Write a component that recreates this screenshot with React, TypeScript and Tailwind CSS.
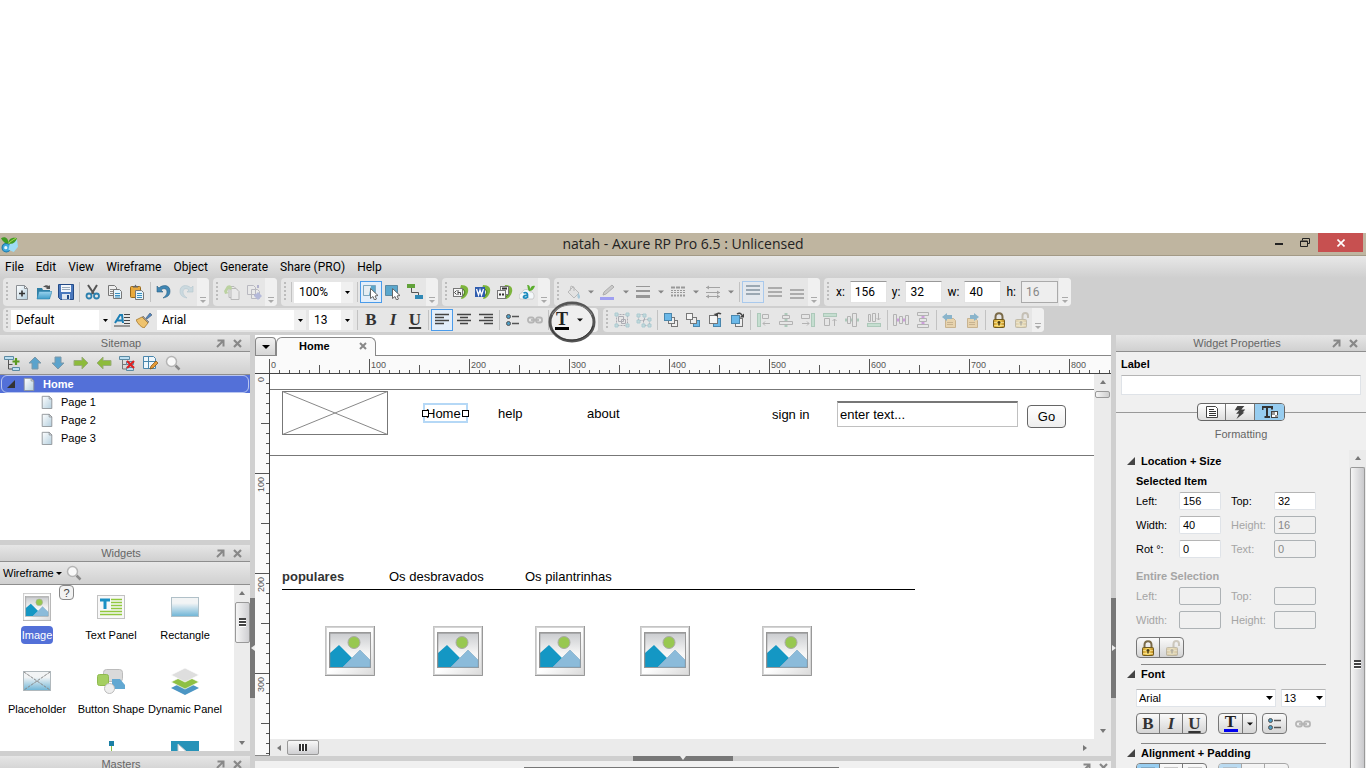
import { ReactNode } from 'react';

type IconName = keyof typeof icons;

const doc = (
  <>
    <path d="M2.5 1.5h8l3 3v11h-11z" fill="url(#page)" stroke="#8a8f94" />
    <path d="M10.5 1.5v3h3z" fill="#fff" stroke="#8a8f94" />
  </>
);

const phone = (
  <>
    <path d="M8 1c6 0 8 3 7 7-1 4-4 7-7 7l1-4c2-1 3-3 1-5l-3-1z" fill="#7db53c" />
    <path d="M10 5c3 2 2 6-1 8" fill="none" stroke="#4f8424" strokeWidth="1" />
  </>
);

const stackBox = (x: number, y: number, fill: string) => (
  <rect x={x} y={y} width="6" height="6" fill={fill} stroke="#777" />
);

const lockBody = (
  <>
    <rect x="2.5" y="7.5" width="11" height="8" rx="1" fill="url(#gold)" stroke="#6e5a20" />
    <path d="M3 10.5h10M3 13.5h10" stroke="#fff3b0" strokeOpacity=".6" />
    <path d="M8 9v4.5M6.5 10.5h3" stroke="#4b3c10" strokeWidth="1.5" />
  </>
);

const note = (
  <path d="M3.5 6.5h8l2 2v7h-10zM5 10.5h6M5 12.5h6" fill="#e9c582" stroke="#b08a4a" />
);

const icons = {
  logo: (
    <>
      <circle cx="5" cy="11" r="4" fill="#3fa9dd" stroke="#1575a8" />
      <circle cx="4.5" cy="11" r="1.5" fill="#e8f7ff" />
      <path d="M8 8l7-5 1 7-4 5-5-2z" fill="#9edcf5" />
      <path d="M0 2c4-2 7 0 7 5-4 0-5-2-7-5zM7 7c0-4 3-6 8-5-1 4-4 6-8 5z" fill="#3f9a22" />
      <path d="M7 7c2-2 4-3 7-5" stroke="#a5dd52" />
    </>
  ),
  newFile: (
    <>
      {doc}
      <path d="M5 9.5h6M8 6.5v6" stroke="#333" strokeWidth="1.6" />
    </>
  ),
  open: (
    <>
      <path d="M1 4h5l1 2h7v9H1z" fill="#2f7fa5" />
      <path d="M3 7.5h13L13.5 15H1z" fill="url(#sky)" stroke="#3186b0" strokeWidth=".6" />
      <path d="M7 3c2-2 4-2 6-1l1-1v4h-4l1-1c-1-1-2-1-4-1z" fill="#555" />
    </>
  ),
  save: (
    <>
      <path d="M.5.5h15v15h-13l-2-2z" fill="#4a78bd" stroke="#234a86" />
      <rect x="3" y="1" width="10" height="7" fill="#f3f6fb" />
      <path d="M4 3.5h8M4 5.5h8" stroke="#9ab" />
      <rect x="4" y="10" width="8" height="5.5" fill="#dfe6ef" />
      <rect x="9" y="11" width="2" height="4" fill="#234a86" />
    </>
  ),
  cut: (
    <>
      <path d="M3 1l6 9M12 1L6.5 10" stroke="#555" strokeWidth="2" />
      <circle cx="4" cy="12" r="2.5" fill="none" stroke="#2c80ae" strokeWidth="1.8" />
      <circle cx="11.5" cy="12" r="2.5" fill="none" stroke="#2c80ae" strokeWidth="1.8" />
    </>
  ),
  copy: (
    <>
      <path d="M1.5 1.5h6l2 2v8h-8z" fill="#eee" stroke="#777" />
      <path d="M3 5.5h5M3 7.5h5M3 9.5h3" stroke="#888" />
      <path d="M6.5 5.5h6l2 2v7h-8z" fill="#e5f3fb" stroke="#777" />
      <path d="M8 9.5h5M8 11.5h5M8 13h5" stroke="#3a8fbf" />
    </>
  ),
  paste: (
    <>
      <rect x="1.5" y="2.5" width="10" height="11" rx="1" fill="#e8a93c" stroke="#96681a" />
      <path d="M4 3.5V2h1.5L6.5.5 7.5 2H9v1.5z" fill="#666" />
      <path d="M6.5 6.5h6l2 2v7h-8z" fill="#e5f3fb" stroke="#777" />
      <path d="M8 9.5h5M8 11.5h5M8 13.5h5" stroke="#3a8fbf" />
    </>
  ),
  undo: (
    <path
      d="M1 2v6h6L5 6c2-2 6-2 6 2 0 3-2 4-4 6 5-1 7-3 7-7 0-6-7-7-11-3z"
      fill="#3f87b5"
      stroke="#2b5f82"
      strokeWidth=".6"
    />
  ),
  redo: (
    <path
      d="M15 2v6H9l2-2C9 4 5 4 5 8c0 3 2 4 4 6-5-1-7-3-7-7 0-6 7-7 11-3z"
      fill="#cbd9df"
      stroke="#b4c6ce"
      strokeWidth=".6"
    />
  ),
  rotatePage: (
    <g opacity=".4">
      <path d="M5 2.5h5l3 3v8H5z" fill="#eee" stroke="#777" />
      <path d="M7 4.5h5l3 3v8H7z" fill="#eee" stroke="#777" />
      <path d="M0 7l3-5c3-2 5 0 5 3L6 6C5 4 4 5 3 8l2 1-4 1z" fill="#7db53c" />
    </g>
  ),
  movePage: (
    <g opacity=".4">
      <path d="M1.5 1.5h6l2 2v7h-8zM5.5 5.5h6l2 2v7h-8z" fill="#eee" stroke="#778" />
      <path d="M12 1v3M8 11h4" stroke="#66a" strokeWidth="2" />
      <path d="M12 8l4 4-4 4-4-4z" fill="#6a78c8" />
    </g>
  ),
  selectContain: (
    <>
      <path d="M.5 1.5h12v10H.5z" fill="#5ba7cc" stroke="#7fa7be" />
      <path d="M1 2h7l-2 9H1z" fill="#e6edf2" />
      <path d="M7.5 4.5v10l2.5-2 1.5 3.5 2-1-1.5-3 3-.5z" fill="#fff" stroke="#666" />
    </>
  ),
  selectTouch: (
    <>
      <path d="M.5 1.5h12v10H.5z" fill="#5ba7cc" stroke="#5c8aa3" />
      <path d="M7.5 4.5v10l2.5-2 1.5 3.5 2-1-1.5-3 3-.5z" fill="#fff" stroke="#666" />
    </>
  ),
  connector: (
    <>
      <path d="M4.5 4v4.5h7V12" fill="none" stroke="#555" />
      <rect x="0" y="0" width="8" height="4" fill="#62a23a" />
      <rect x="8" y="11" width="8" height="4" fill="#2f88b5" />
    </>
  ),
  html: (
    <>
      {phone}
      <rect x=".5" y="4.5" width="9" height="8" fill="#f5f5f5" stroke="#777" />
      <path d="M3.5 6.5l-2 2 2 2M5 6v5M5 8.5h2.5V11" fill="none" stroke="#444" />
    </>
  ),
  word: (
    <>
      {phone}
      <rect x="0" y="3" width="10" height="10" fill="#2f5cae" />
      <path d="M1.5 5l2 6L5 6l1.5 5 2-6" fill="none" stroke="#fff" strokeWidth="1.3" />
    </>
  ),
  batch: (
    <>
      {phone}
      <rect x="3.5" y="2.5" width="8" height="8" fill="#f5f5f5" stroke="#777" />
      <rect x=".5" y="6.5" width="8" height="8" fill="#f5f5f5" stroke="#777" />
      <path d="M2 10.5h2M5 10.5h2M5 4.5h5" stroke="#333" strokeWidth="2" />
    </>
  ),
  axshare: (
    <>
      <path d="M1 15c-2-3 0-6 2-6 0-4 7-5 8-1 4-1 5 5 3 7z" fill="#f4f8fa" stroke="#aaa" strokeWidth=".5" />
      <path
        d="M4.5 9c2-1 4 0 4 1.5V14M8.5 11.5c-4-.5-5 2-3 2.5 1 .3 3 0 3-1.5"
        fill="none"
        stroke="#1b8bbd"
        strokeWidth="1.7"
      />
      <path d="M10 7C8 4 9 2 8 1c3 0 3 2 3 4 1-3 3-4 5-3-1 3-3 5-6 5z" fill="#5bae2e" />
    </>
  ),
  bucket: (
    <g opacity=".4">
      <path d="M3 8l5-5 6 6-5 5z" fill="#ddd" stroke="#777" />
      <path d="M5 7l1-5 3 1v4" fill="none" stroke="#777" />
      <path d="M13 9c2 2 3 4 1 6-2-1-2-3-1-6z" fill="#4d9cc5" />
    </g>
  ),
  pen: (
    <g opacity=".45">
      <path d="M3 11l1-3 8-7 2 2-8 7z" fill="#aaa" stroke="#666" />
      <rect x="0" y="13" width="14" height="3" fill="#4b4bff" />
    </g>
  ),
  lineWidth: (
    <g stroke="#777" opacity=".7">
      <path d="M1 2.5h14" />
      <path d="M1 7h14" strokeWidth="2" />
      <path d="M1 12.5h14" strokeWidth="3" />
    </g>
  ),
  lineStyle: (
    <g opacity=".6" stroke="#666" fill="none">
      <path d="M1 3.5h14" strokeWidth="2" strokeDasharray="4 1" />
      <path d="M1 6.5h14M1 8.5h14" strokeDasharray="2 1" />
      <path d="M1 11.5h14" strokeWidth="2" strokeDasharray="2 1" />
    </g>
  ),
  arrows: (
    <g stroke="#888" fill="#888" opacity=".7">
      <path d="M1 3.5h14M1 8.5h14M1 12.5h14" />
      <path d="M4 1.5v4l-3-2zM12 6.5v4l3-2zM4 10.5v4l-3-2zM12 10.5v4l3-2z" stroke="none" />
    </g>
  ),
  valignTop: <path d="M1 2h14M1 6h14M1 10h14" stroke="#8492a0" strokeWidth="1.5" />,
  valignMid: <path d="M1 4h14M1 8h14M1 12h14" stroke="#999" strokeWidth="1.5" />,
  valignBot: <path d="M1 6h14M1 10h14M1 14h14" stroke="#999" strokeWidth="1.5" />,
  styleText: (
    <>
      <path d="M1 11l5-8h2l1 8M3 8.5h5" fill="none" stroke="#1c7fb5" strokeWidth="2" />
      <path d="M10 2.5h6M10 5.5h6M10 8.5h6M10 11.5h6M0 14h16" stroke="#444" />
    </>
  ),
  brush: (
    <>
      <path d="M10 6l4-5 2 2-5 4z" fill="#4f86c4" stroke="#456" strokeWidth=".6" />
      <path d="M7 4l6 6-2 1-5-5z" fill="#999" stroke="#666" strokeWidth=".6" />
      <path d="M6 5l6 6-4 5c-3-1-6-4-8-8z" fill="#eec26d" stroke="#a5762a" strokeWidth=".8" />
    </>
  ),
  left: <path d="M1 2.5h14M1 5.5h9M1 8.5h14M1 11.5h9" stroke="#444" strokeWidth="1.5" />,
  center: <path d="M1 2.5h14M4 5.5h8M1 8.5h14M4 11.5h8" stroke="#444" strokeWidth="1.5" />,
  right: <path d="M1 2.5h14M6 5.5h9M1 8.5h14M6 11.5h9" stroke="#444" strokeWidth="1.5" />,
  bullets: (
    <>
      <path d="M7 4.5h7M7 11.5h7" stroke="#555" strokeWidth="1.5" />
      <circle cx="3.5" cy="4.5" r="2" fill="#4b9cc4" stroke="#555" />
      <circle cx="3.5" cy="11.5" r="2" fill="#4b9cc4" stroke="#555" />
    </>
  ),
  link: (
    <g fill="none" stroke="#b5b5b5" strokeWidth="1.8">
      <rect x="1" y="5.5" width="6" height="5" rx="2" />
      <rect x="9" y="5.5" width="6" height="5" rx="2" />
      <path d="M4 8h8" />
    </g>
  ),
  group: (
    <g opacity=".45" fill="none" stroke="#667">
      <path d="M2.5 2.5h11v11h-11z" strokeDasharray="2 1" />
      <path d="M4.5 4.5h5v5h-5zM7.5 7.5h4v4h-4z" />
      <path d="M1 1h3v3H1zM12 1h3v3h-3zM1 12h3v3H1zM12 12h3v3h-3z" fill="#9cc" stroke="#6ab" />
    </g>
  ),
  ungroup: (
    <g opacity=".45" fill="none" stroke="#667">
      <path d="M2.5 2.5h6v6h-6zM7.5 7.5h6v6h-6z" strokeDasharray="2 1" />
      <path
        d="M1 2h3v3H1zM7 2h3v3H7zM12 6h3v3h-3zM1 8h3v3H1zM6 12h3v3H6zM12 12h3v3h-3z"
        fill="#9cc"
        stroke="#6ab"
      />
    </g>
  ),
  toFront: (
    <>
      {stackBox(8.5, 8.5, '#eee')}
      {stackBox(5.5, 5.5, '#eee')}
      <rect x="1.5" y="1.5" width="7" height="7" fill="#6bb8e8" stroke="#4a86ac" />
    </>
  ),
  toBack: (
    <>
      <rect x="8.5" y="8.5" width="6" height="6" fill="#6bb8e8" stroke="#4a86ac" />
      {stackBox(5.5, 5.5, '#eee')}
      {stackBox(1.5, 1.5, '#f5f5f5')}
    </>
  ),
  forward: (
    <>
      <rect x="6.5" y="6.5" width="7" height="8" fill="#6bb8e8" stroke="#4a86ac" />
      <rect x="2.5" y="3.5" width="8" height="8" fill="#f5f5f5" stroke="#777" />
      <path d="M14 2c-2-1.500-4-1-5 1.500" fill="none" stroke="#444" strokeWidth="1.500" />
      <path d="M6.500 2l4.500 3V1z" fill="#444" />
    </>
  ),
  backward: (
    <>
      <rect x="6.5" y="6.5" width="7" height="8" fill="#eee" stroke="#777" />
      <rect x="2.5" y="3.5" width="8" height="8" fill="#6bb8e8" stroke="#4a86ac" />
      <path d="M8 2c2-1.500 4-1 5 1.500" fill="none" stroke="#444" strokeWidth="1.500" />
      <path d="M15 1.500v4h-4.500z" fill="#444" />
    </>
  ),
  alignL: (
    <g opacity=".45">
      <rect x="1.5" y="1.5" width="3" height="13" fill="#9fd6b6" stroke="#6aa886" />
      <path d="M6.5 2.5h6v4h-6zM14 11.5H7M9 9.5l-2 2 2 2" fill="none" stroke="#777" />
    </g>
  ),
  alignC: (
    <g opacity=".45">
      <path d="M8 1v14" stroke="#6aa886" strokeWidth="3" />
      <path d="M4.5 3.5h7v3h-7zM1.5 9.5h13v3h-13z" fill="#e8e8e8" stroke="#777" />
    </g>
  ),
  alignR: (
    <g opacity=".45">
      <rect x="11.5" y="1.5" width="3" height="13" fill="#9fd6b6" stroke="#6aa886" />
      <path d="M1.5 2.5h8v4h-8zM2 11.5h7M7 9.5l2 2-2 2" fill="none" stroke="#777" />
    </g>
  ),
  alignT: (
    <g opacity=".45">
      <rect x="1.5" y="1.5" width="13" height="3" fill="#9fd6b6" stroke="#6aa886" />
      <path d="M2.5 6.5h5v7h-5zM12.5 14V7M10.5 9l2-2 2 2" fill="none" stroke="#777" />
    </g>
  ),
  alignM: (
    <g opacity=".45">
      <path d="M1 8h14" stroke="#6aa886" strokeWidth="3" />
      <path d="M3.5 4.5h3v7h-3zM8.5 1.5h4v13h-4z" fill="#e8e8e8" stroke="#777" />
    </g>
  ),
  alignB: (
    <g opacity=".45">
      <rect x="1.5" y="11.5" width="13" height="3" fill="#9fd6b6" stroke="#6aa886" />
      <path d="M2.5 2.5h2v7h-2zM6.5 1.5h3v8h-3zM12.5 1v7M10.5 6l2 2 2-2" fill="none" stroke="#777" />
    </g>
  ),
  distH: (
    <g opacity=".45">
      <path d="M4 8h9" stroke="#b04bd0" strokeWidth="3" />
      <path d="M.5 2.5h3v11h-3zM6.5 4.5h3v7h-3zM12.5 3.5h3v9h-3z" fill="#e8e8e8" stroke="#777" />
    </g>
  ),
  distV: (
    <g opacity=".45">
      <path d="M8 3v9" stroke="#b04bd0" strokeWidth="3" />
      <path d="M2.5.5h11v3h-11zM4.5 6.5h7v3h-7zM2.5 12.5h11v3h-11z" fill="#e8e8e8" stroke="#777" />
    </g>
  ),
  prevNote: (
    <g opacity=".55">
      {note}
      <path d="M0 5l5-4v2h5v4H5v2z" fill="#3f8db5" />
    </g>
  ),
  nextNote: (
    <g opacity=".55">
      {note}
      <path d="M15 5l-5-4v2H6v4h4v2z" fill="#3f8db5" />
    </g>
  ),
  lock: (
    <>
      <path d="M4.5 8V5c0-5 7-5 7 0v3" fill="none" stroke="#7a6a48" strokeWidth="2" />
      {lockBody}
    </>
  ),
  unlock: (
    <g opacity=".3">
      <path d="M9.5 8V4c0-4 5.5-4 5.5 0v2" fill="none" stroke="#7a6a48" strokeWidth="2" />
      {lockBody}
    </g>
  ),
  addPage: (
    <>
      <path d="M4.5 5v9h4M4.5 9.5h4" fill="none" stroke="#555" />
      <path d="M.5 1.5h9v3h-9zM8.5 12.5h7v3h-7z" fill="#bcdff2" stroke="#5c8aa3" />
      <path d="M12 3v7M8.5 6.5h7" stroke="#5a9a1e" strokeWidth="2.2" />
    </>
  ),
  up: <path d="M8 2l6 6h-3v6H5V8H2z" fill="#5ba3cc" stroke="#7d98a8" />,
  down: <path d="M8 14l6-6h-3V2H5v6H2z" fill="#5ba3cc" stroke="#7d98a8" />,
  indent: <path d="M15 8L9 2v3.5H1v5h8V14z" fill="#8dbb3c" stroke="#9aad7c" />,
  outdent: <path d="M1 8l6-6v3.5h8v5H7V14z" fill="#8dbb3c" stroke="#9aad7c" />,
  deletePage: (
    <>
      <path d="M3.5 5v9h4M3.5 9.5h4" fill="none" stroke="#777" />
      <path d="M.5 1.5h10v3H.5zM7.5 6.5h7v3h-7zM7.5 12.5h7v3h-7z" fill="#bcdff2" stroke="#5c8aa3" />
      <path d="M8 6l7 7M15 6l-7 7" stroke="#dd2222" strokeWidth="2.2" />
    </>
  ),
  editPage: (
    <>
      <path d="M1.5 1.5h10l2 2v10h-12zM1.5 6.5h12M6.5 1.5v12" fill="#eef6fb" stroke="#4a86ac" />
      <path d="M8 14l1-3 5-5 2 2-5 5z" fill="#e59a35" stroke="#7c4d10" strokeWidth=".7" />
    </>
  ),
  search: (
    <>
      <path d="M10.500 10.500l4 4" stroke="#8a8a8a" strokeWidth="2.500" />
      <circle cx="6.5" cy="6.5" r="5" fill="#f9f9f9" stroke="#b5b5b5" strokeWidth="1.5" />
    </>
  ),
  page: doc,
  notes: (
    <>
      <path d="M2.5 2.5h9l2 2v9h-11z" fill="#fff" stroke="#444" />
      <path d="M5 5.5h5M5 7.5h7M5 9.5h7M5 11.5h7" stroke="#333" />
    </>
  ),
  bolt: <path d="M5 1h8L9.500 5H14l-3 3.500h2L4 16l3-6H3.500L7 6H2z" fill="#444" />,
  formatting: (
    <>
      <path d="M0 3h10v2.5M5 3v10M2.5 13H8M.5 3v3" fill="none" stroke="#333" strokeWidth="2" />
      <rect x="9.5" y="7.5" width="6" height="6" fill="#fff" stroke="#444" />
      <path d="M10 8h3v3h3v2h-3v-2h-3z" fill="#999" />
    </>
  ),
  caret: <path d="M5 6.5h6L8 9.5z" fill="#111" />,
};

const Icon = ({ name, className = 'size-4' }: { name: IconName; className?: string }) => (
  <svg viewBox="0 0 16 16" className={`${className} shrink-0`} aria-hidden="true">
    {icons[name]}
  </svg>
);

const toolButton = 'flex h-[22px] w-[22px] shrink-0 items-center justify-center border';

const Tool = ({ name, label, active }: { name: IconName; label: string; active?: boolean }) => (
  <button
    type="button"
    aria-label={label}
    className={`${toolButton} ${active ? 'border-[#4a9bea] bg-[#e3eefa]' : 'border-transparent'}`}
  >
    <Icon name={name} />
  </button>
);

const letterClass: Record<string, string> = {
  B: 'font-bold',
  I: 'italic font-bold',
  U: 'underline font-bold decoration-2 underline-offset-2',
};

const Letter = ({ children }: { children: string }) => (
  <span className={`font-['Liberation_Serif',serif] text-[17px] leading-5 text-[#333] ${letterClass[children]}`}>
    {children}
  </span>
);

const LetterTool = ({ children, label }: { children: string; label: string }) => (
  <button type="button" aria-label={label} className={`${toolButton} border-transparent`}>
    <Letter>{children}</Letter>
  </button>
);

const Separator = () => (
  <span className="flex w-[5px] shrink-0 justify-center">
    <span className="h-5 w-px bg-[#c2c2c2]" />
  </span>
);

const DropArrow = ({ dim }: { dim?: boolean }) => (
  <span className={`flex w-[13px] shrink-0 justify-center ${dim ? 'opacity-45' : ''}`}>
    <Icon name="caret" />
  </span>
);

const ToolGroup = ({ children }: { children: ReactNode }) => (
  <div className="flex shrink-0 items-center rounded bg-[#e6e6e6]">
    <span className="mx-[3px] h-5 w-0.5 shrink-0 bg-[repeating-linear-gradient(#bcbcbc_0_2px,transparent_2px_4px)]" />
    {children}
    <button
      type="button"
      aria-label="Toolbar options"
      className="flex w-3 shrink-0 items-end justify-center self-stretch rounded-r bg-[#f0f0f0] pb-[3px]"
    >
      <svg viewBox="0 0 6 6" className="size-1.5">
        <path d="M0 .5h6" stroke="#aaa" />
        <path d="M0 3h6L3 6z" fill="#aaa" />
      </svg>
    </button>
  </div>
);

const Combo = ({
  value,
  label,
  className,
  boxed,
}: {
  value: string;
  label: string;
  className: string;
  boxed?: boolean;
}) => (
  <div className={`relative shrink-0 bg-white ${className}`}>
    <select
      aria-label={label}
      className={`h-full w-full appearance-none bg-transparent pr-3 text-black outline-none ${
        boxed ? 'pl-[5px]' : 'pl-0.5'
      }`}
    >
      <option>{value}</option>
    </select>
    <span
      className={`pointer-events-none absolute inset-y-0 right-0 flex w-3 items-center justify-center ${
        boxed ? 'bg-[#f0f0f0]' : ''
      }`}
    >
      <svg viewBox="0 0 7 4" className={boxed ? 'h-[3px] w-[5px]' : 'h-1 w-[7px]'}>
        <path d="M0 0h7L3.5 4z" fill="#000" />
      </svg>
    </span>
  </div>
);

const menus = ['File', 'Edit', 'View', 'Wireframe', 'Object', 'Generate', 'Share (PRO)', 'Help'];

const TitleBar = () => (
  <header className="flex h-[23px] shrink-0 items-center border-b border-[#a39a86] bg-[#bfb5a0]">
    <div className="flex-1">
      <Icon name="logo" className="ml-px size-[17px]" />
    </div>
    <h1 className="font-['Open_Sans',sans-serif] text-sm text-[#222]">natah - Axure RP Pro 6.5 : Unlicensed</h1>
    <div className="flex flex-1 items-center justify-end self-stretch">
      <button type="button" aria-label="Minimize" className="flex h-full w-[26px] items-center justify-center">
        <span className="h-0.5 w-2 bg-[#222]" />
      </button>
      <button type="button" aria-label="Restore" className="flex h-full w-[26px] items-center justify-center pb-1">
        <svg viewBox="0 0 10 9" className="h-[9px] w-2.5">
          <path d="M2.5 2.5v-2h7v5h-2M.5 3h7v5.5h-7zM.5 3.5h7" fill="none" stroke="#222" />
        </svg>
      </button>
      <button
        type="button"
        aria-label="Close"
        className="mr-[3px] flex h-[19px] w-[45px] items-center justify-center self-start bg-[#c75050]"
      >
        <svg viewBox="0 0 8 8" className="size-2">
          <path d="M.5.5l7 7M7.5.5l-7 7" stroke="#fff" strokeWidth="1.6" />
        </svg>
      </button>
    </div>
  </header>
);

const MenuBar = () => (
  <nav className="flex h-[22px] shrink-0 items-center gap-3 bg-linear-to-b from-[#e8e8e8] to-[#cfcfcf] pl-[5px] font-[Roboto,sans-serif] text-xs text-black">
    {menus.map((menu) => (
      <button key={menu} type="button">
        {menu}
      </button>
    ))}
  </nav>
);

const coordinates = [
  { name: 'x', value: '156' },
  { name: 'y', value: '32' },
  { name: 'w', value: '40' },
  { name: 'h', value: '16', disabled: true },
];

const Toolbars = () => (
  <div className="relative z-10 flex shrink-0 flex-col gap-0.5 bg-[#cfcfcf] pb-[3px] pl-[3px] font-[Roboto,sans-serif] text-xs">
    <div className="flex h-7 gap-1">
      <ToolGroup>
        <Tool name="newFile" label="New" />
        <Tool name="open" label="Open" />
        <Tool name="save" label="Save" />
        <Separator />
        <Tool name="cut" label="Cut" />
        <Tool name="copy" label="Copy" />
        <Tool name="paste" label="Paste" />
        <Separator />
        <Tool name="undo" label="Undo" />
        <Tool name="redo" label="Redo" />
      </ToolGroup>
      <ToolGroup>
        <Tool name="rotatePage" label="Check out" />
        <Tool name="movePage" label="Check in" />
      </ToolGroup>
      <ToolGroup>
        <Separator />
        <Combo value="100%" label="Zoom" className="mr-0.5 h-[21px] w-[59px]" boxed />
        <Separator />
        <Tool name="selectContain" label="Contained select" active />
        <Tool name="selectTouch" label="Intersected select" />
        <Tool name="connector" label="Connector mode" />
      </ToolGroup>
      <ToolGroup>
        <Tool name="html" label="Prototype" />
        <Tool name="word" label="Specification" />
        <Tool name="batch" label="More generators" />
        <Tool name="axshare" label="AxShare" />
      </ToolGroup>
      <ToolGroup>
        <Tool name="bucket" label="Fill color" />
        <DropArrow dim />
        <Tool name="pen" label="Line color" />
        <DropArrow dim />
        <Tool name="lineWidth" label="Line width" />
        <DropArrow dim />
        <Tool name="lineStyle" label="Line pattern" />
        <DropArrow dim />
        <Tool name="arrows" label="Arrow style" />
        <DropArrow dim />
        <Separator />
        <button type="button" aria-label="Align top" className={`${toolButton} border-[#a9c9ec] bg-[#e3e8ee]`}>
          <Icon name="valignTop" />
        </button>
        <Tool name="valignMid" label="Align middle" />
        <Tool name="valignBot" label="Align bottom" />
      </ToolGroup>
      <ToolGroup>
        <div className="flex gap-[5px] pl-1 pr-px">
          {coordinates.map(({ name, value, disabled }) => (
            <label key={name} className="flex items-center gap-[5px]">
              {name}:
              <input
                defaultValue={value}
                disabled={disabled}
                className="h-[22px] w-[37px] border border-[#e3e3e3] border-t-[#999] bg-white pl-1 text-black disabled:border-[#aaa] disabled:bg-[#eee] disabled:text-[#888]"
              />
            </label>
          ))}
        </div>
      </ToolGroup>
    </div>

    <div className="flex h-6 gap-[5px]">
      <ToolGroup>
        <Combo value="Default" label="Widget style" className="h-5 w-[100px]" boxed />
        <Tool name="styleText" label="Style editor" />
        <Tool name="brush" label="Format painter" />
        <Combo value="Arial" label="Font family" className="ml-0.5 h-5 w-[149px]" boxed />
        <Combo value="13" label="Font size" className="ml-[3px] mr-0.5 h-5 w-11" boxed />
        <Separator />
        <LetterTool label="Bold">B</LetterTool>
        <LetterTool label="Italic">I</LetterTool>
        <LetterTool label="Underline">U</LetterTool>
        <Separator />
        <Tool name="left" label="Align left" active />
        <Tool name="center" label="Align center" />
        <Tool name="right" label="Align right" />
        <Separator />
        <Tool name="bullets" label="Bullets" />
        <Tool name="link" label="Insert link" />
        <Separator />
        <div className="relative flex items-center">
          <svg viewBox="0 0 48 44" className="absolute -left-[3px] -top-[11px] z-20 h-11 w-12">
            <ellipse cx="24" cy="22" rx="22" ry="19" fill="#efefef" stroke="#555" strokeWidth="3" />
            <path d="M4 15C8 3 38 0 44 15" fill="none" stroke="#888" />
            <path d="M4 30c8 14 34 14 41-4" fill="none" stroke="#333" />
          </svg>
          <button type="button" aria-label="Text color" className="relative z-20 flex w-[22px] flex-col items-center">
            <span className="font-['Liberation_Serif',serif] text-lg font-bold leading-4 text-[#222]">T</span>
            <span className="h-[3px] w-[14px] bg-black" />
          </button>
          <span className="relative z-20 flex">
            <DropArrow />
          </span>
        </div>
      </ToolGroup>
      <ToolGroup>
        <Tool name="group" label="Group" />
        <Tool name="ungroup" label="Ungroup" />
        <Separator />
        <Tool name="toFront" label="Bring to front" />
        <Tool name="toBack" label="Send to back" />
        <Tool name="forward" label="Bring forward" />
        <Tool name="backward" label="Send backward" />
        <Separator />
        <Tool name="alignL" label="Align lefts" />
        <Tool name="alignC" label="Align centers" />
        <Tool name="alignR" label="Align rights" />
        <Tool name="alignT" label="Align tops" />
        <Tool name="alignM" label="Align middles" />
        <Tool name="alignB" label="Align bottoms" />
        <Separator />
        <Tool name="distH" label="Distribute horizontally" />
        <Tool name="distV" label="Distribute vertically" />
        <Separator />
        <Tool name="prevNote" label="Previous footnote" />
        <Tool name="nextNote" label="Next footnote" />
        <Separator />
        <Tool name="lock" label="Lock" />
        <Tool name="unlock" label="Unlock" />
      </ToolGroup>
    </div>
  </div>
);

const PanelButtons = () => (
  <div className="flex gap-2">
    <button type="button" aria-label="Pop out">
      <svg viewBox="0 0 9 9" className="size-[9px]">
        <path d="M1.500 1.500h6v6M7.500 1.500L1 8" fill="none" stroke="#888" strokeWidth="2" />
      </svg>
    </button>
    <button type="button" aria-label="Close panel">
      <svg viewBox="0 0 9 9" className="size-[9px]">
        <path d="M1 1l7 7M8 1L1 8" stroke="#888" strokeWidth="2.200" />
      </svg>
    </button>
  </div>
);

const PanelHeader = ({ title }: { title: string }) => (
  <div className="flex h-[17px] shrink-0 items-center border-b border-[#8e8e8e] bg-linear-to-b from-[#e6e6e6] to-[#d0d0d0]">
    <div className="flex-1" />
    <h2 className="text-[11px] leading-4 text-[#666]">{title}</h2>
    <div className="flex flex-1 justify-end pr-2">
      <PanelButtons />
    </div>
  </div>
);

const panelToolbar =
  'flex h-[23px] shrink-0 items-center border-b border-[#8e8e8e] bg-linear-to-b from-[#e8e8e8] to-[#d0d0d0]';

const sitemapTools: { name: IconName; label: string }[] = [
  { name: 'addPage', label: 'Add page' },
  { name: 'up', label: 'Move up' },
  { name: 'down', label: 'Move down' },
  { name: 'indent', label: 'Indent' },
  { name: 'outdent', label: 'Outdent' },
  { name: 'deletePage', label: 'Delete page' },
  { name: 'editPage', label: 'Edit page' },
  { name: 'search', label: 'Search pages' },
];

const Sitemap = () => (
  <section className="flex h-[205px] shrink-0 flex-col bg-white">
    <PanelHeader title="Sitemap" />
    <div className={`${panelToolbar} gap-[7px] pl-1`}>
      {sitemapTools.map(({ name, label }) => (
        <button key={name} type="button" aria-label={label}>
          <Icon name={name} />
        </button>
      ))}
    </div>
    <ul className="text-[11px] text-black">
      <li className="bg-[#5370d8] px-px font-bold text-white">
        <div className="flex h-[18px] items-center rounded-md border border-[#b9c6f0]">
          <svg viewBox="0 0 8 8" className="ml-[5px] size-2">
            <path d="M8 0v8H0z" fill="#333" />
          </svg>
          <Icon name="page" className="ml-[7px] size-[14px]" />
          <span className="ml-[7px]">Home</span>
        </div>
      </li>
      {['Page 1', 'Page 2', 'Page 3'].map((page) => (
        <li key={page} className="flex h-[18px] items-center pl-10">
          <Icon name="page" className="size-[14px]" />
          <span className="ml-[7px]">{page}</span>
        </li>
      ))}
    </ul>
  </section>
);

const Picture = ({ className }: { className: string }) => (
  <svg viewBox="0 0 50 50" className={className} aria-hidden="true">
    <rect x=".5" y=".5" width="49" height="49" fill="#d4d4d4" stroke="#c4c4c4" />
    <path d="M49.5 0v49.5H0" fill="none" stroke="#999" />
    <rect x="2" y="2" width="46" height="46" fill="url(#frame)" />
    <rect x="4.5" y="6.5" width="41" height="35" fill="url(#haze)" stroke="#999" />
    <circle cx="29" cy="16.5" r="6" fill="#98c850" stroke="#a9aaa5" />
    <path d="M5 27l9-8 13 13-9 9H5z" fill="#1497c4" />
    <path d="M18 41l17-17 10 10v7z" fill="#8bbbda" stroke="#79a6c4" strokeWidth=".6" />
    <path d="M5 41.500V7.500h40" fill="none" stroke="#888" strokeOpacity=".5" />
  </svg>
);

const widgets: { label: string; drawing: ReactNode }[] = [
  { label: 'Image', drawing: <Picture className="size-7" /> },
  {
    label: 'Text Panel',
    drawing: (
      <svg viewBox="0 0 28 28" className="size-7">
        <rect x=".5" y="2.5" width="27" height="23" fill="#f8f8f8" stroke="#c2c2c2" />
        <path d="M3 7h10M8 6v10" stroke="#1b90c4" strokeWidth="3" />
        <path
          d="M14 6.5h11M14 9.5h11M14 12.5h11M14 15.5h11M3 18.500h22M3 21.500h22"
          stroke="#91c83e"
          strokeWidth="1.400"
        />
      </svg>
    ),
  },
  {
    label: 'Rectangle',
    drawing: (
      <svg viewBox="0 0 28 28" className="size-7">
        <rect x=".5" y="4.5" width="27" height="19" fill="url(#water)" stroke="#b0c0c8" />
      </svg>
    ),
  },
  {
    label: 'Placeholder',
    drawing: (
      <svg viewBox="0 0 28 28" className="size-7">
        <rect x=".5" y="4.5" width="27" height="19" fill="url(#water)" stroke="#b0b8bc" />
        <path d="M1 5l26 18M27 5L1 23" stroke="#888" strokeDasharray="3 1" />
      </svg>
    ),
  },
  {
    label: 'Button Shape',
    drawing: (
      <svg viewBox="0 0 28 28" className="size-7">
        <rect x="6.5" y="2.5" width="19" height="12" rx="3" fill="#dadada" stroke="#bbb" />
        <path d="M15 12h8l5 6v4H15z" fill="#62a8d2" />
        <rect x=".5" y="7.5" width="11" height="11" rx="2" fill="#a5cf62" stroke="#8fba50" />
        <circle cx="12.5" cy="21.5" r="5" fill="#eee" stroke="#bbb" />
      </svg>
    ),
  },
  {
    label: 'Dynamic Panel',
    drawing: (
      <svg viewBox="0 0 28 28" className="size-7">
        <path d="M14 14l14 7-14 7-14-7z" fill="#4c96c4" />
        <path d="M14 8l14 7-14 7-14-7z" fill="#8ec044" stroke="#fff" strokeWidth=".7" />
        <path d="M14 1l14 7-14 7L0 8z" fill="#dedede" stroke="#fff" strokeWidth=".7" />
      </svg>
    ),
  },
];

const WidgetItem = ({ label, drawing }: { label: string; drawing: ReactNode }) => (
  <li className="flex h-[74px] flex-col items-center pt-2">
    {drawing}
    <span
      className={`mt-[5px] whitespace-nowrap rounded-sm px-px leading-[18px] ${
        label === 'Image' ? 'bg-[#5370d8] text-white' : 'text-black'
      }`}
    >
      {label}
    </span>
  </li>
);

const ArrowGlyph = ({ className }: { className: string }) => (
  <svg viewBox="0 0 6 4" className={`h-1 w-1.5 ${className}`}>
    <path d="M0 4h6L3 0z" fill="#777" />
  </svg>
);

const gripV = 'h-[9px] w-[7px] bg-[repeating-linear-gradient(#444_0_2px,#fff_2px_3px)]';

const Widgets = () => (
  <section className="flex h-[206px] shrink-0 flex-col bg-white text-[11px]">
    <PanelHeader title="Widgets" />
    <div className={`${panelToolbar} gap-1 pl-[3px]`}>
      <button type="button" className="flex items-center gap-0.5">
        Wireframe
        <svg viewBox="0 0 6 3" className="h-[3px] w-1.5">
          <path d="M0 0h6L3 3z" />
        </svg>
      </button>
      <button type="button" aria-label="Search widgets">
        <Icon name="search" />
      </button>
    </div>
    <div className="flex min-h-0 flex-1">
      <div className="relative flex-1 overflow-hidden">
        <ul className="grid grid-cols-[74px_74px_74px]">
          {widgets.map((widget) => (
            <WidgetItem key={widget.label} {...widget} />
          ))}
          <li aria-label="Vertical Line" className="col-start-2 flex justify-center pt-2">
            <svg viewBox="0 0 28 28" className="size-7">
              <path d="M14.5 4v24" stroke="#8ec044" />
              <rect x="12" y="0" width="5" height="5" fill="#1b80a5" />
            </svg>
          </li>
          <li aria-label="Image Map Region" className="flex justify-center pt-2">
            <svg viewBox="0 0 28 28" className="size-7">
              <rect y="0" width="28" height="20" fill="#2793b8" />
              <path d="M7 3v14l10-5z" fill="#fff" stroke="#ccc" />
            </svg>
          </li>
        </ul>
        <button
          type="button"
          className="absolute left-[59px] top-0 size-[15px] rounded-sm border border-[#888] bg-[#f2f2f2] text-[11px] leading-3 text-[#444]"
        >
          ?
        </button>
      </div>
      <div className="flex w-4 flex-col items-center bg-[#ececec] py-1.5">
        <ArrowGlyph className="" />
        <span className="mt-[7px] flex h-[41px] w-[15px] items-center justify-center rounded-xs border border-[#999] bg-linear-to-r from-[#f5f5f5] to-[#cfcfd2]">
          <span className={gripV} />
        </span>
        <ArrowGlyph className="mt-auto rotate-180" />
      </div>
    </div>
  </section>
);

const steps = (count: number) => Array.from({ length: count }, (_, i) => i);

const tickLength = (i: number) => (i % 10 === 0 ? 15 : i % 5 === 0 ? 9 : 4);

const HorizontalRuler = () => (
  <svg className="h-[18px] w-full font-['Liberation_Sans',sans-serif] text-[9px]" aria-hidden="true">
    {steps(120).map((i) => (
      <path key={i} d={`M${i * 10 + 0.5} ${18 - tickLength(i)}V18`} stroke="#555" />
    ))}
    {steps(9).map((i) => (
      <text key={i} x={i * 100 + 2} y="12" fill="#555">
        {i * 100}
      </text>
    ))}
    <path d="M0 17.5h1400" stroke="#444" />
  </svg>
);

const VerticalRuler = () => (
  <svg className="h-full w-[15px] font-['Liberation_Sans',sans-serif] text-[9px]" aria-hidden="true">
    {steps(80).map((i) => (
      <path key={i} d={`M${15 - tickLength(i)} ${i * 10 - 0.5}H15`} stroke="#555" />
    ))}
    {steps(4).map((i) => (
      <text key={i} transform={`translate(9 ${i * 100 + 3}) rotate(-90)`} textAnchor="end" fill="#555">
        {i * 100}
      </text>
    ))}
    <path d="M14.5 0v1400" stroke="#444" />
  </svg>
);

// Wireframe widgets keep the coordinates they were dropped at.
const labels = [
  { text: 'help', place: 'left-[228px] top-8' },
  { text: 'about', place: 'left-[317px] top-8' },
  { text: 'sign in', place: 'left-[502px] top-[33px]' },
  { text: 'Os desbravados', place: 'left-[119px] top-[195px]' },
  { text: 'Os pilantrinhas', place: 'left-[255px] top-[195px]' },
];

const pictures = ['left-[55px]', 'left-[163px]', 'left-[265px]', 'left-[370px]', 'left-[492px]'];

const handle = 'absolute top-[5px] size-[7px] border border-black bg-white';

const Canvas = () => (
  <div className="relative min-w-0 flex-1 overflow-hidden bg-white text-[13px] leading-4 text-black">
    <div className="absolute inset-x-0 top-[15px] h-[67px] border-y border-[#777]" />
    <svg viewBox="0 0 106 44" className="absolute left-3 top-[17px] h-11 w-[106px]">
      <rect x=".5" y=".5" width="105" height="43" fill="#fff" stroke="#777" />
      <path d="M.5.5l105 43M105.5.5l-105 43" stroke="#888" />
    </svg>
    <div className="absolute left-[153px] top-[29px] h-5 w-[45px] border-2 border-[#b5d8f6] pl-px pt-px">
      Home
      <span className={`${handle} -left-[3px]`} />
      <span className={`${handle} -right-[3px]`} />
    </div>
    {labels.map(({ text, place }) => (
      <span key={text} className={`absolute whitespace-nowrap ${place}`}>
        {text}
      </span>
    ))}
    <input
      aria-label="Search"
      defaultValue="enter text..."
      className="absolute left-[567px] top-[27px] h-[26px] w-[181px] border border-[#c0c0c0] border-t-2 border-t-[#777] bg-white pl-0.5"
    />
    <button
      type="button"
      className="absolute left-[757px] top-[31px] h-[23px] w-[39px] rounded-[4px] border border-[#666] bg-linear-to-b from-white to-[#eee]"
    >
      Go
    </button>
    <span className="absolute left-3 top-[195px] font-bold text-[#333]">populares</span>
    <div className="absolute left-3 top-[215px] h-px w-[633px] bg-black" />
    {pictures.map((place) => (
      <Picture key={place} className={`absolute top-[252px] size-[50px] ${place}`} />
    ))}
  </div>
);

const Workspace = () => (
  <main className="flex min-w-0 flex-1 flex-col">
    <div className="flex h-[21px] shrink-0 items-end border-b border-[#888] bg-white">
      <button
        type="button"
        aria-label="Open pages"
        className="flex h-[18px] w-[21px] items-center justify-center rounded-t border border-b-0 border-[#888] bg-linear-to-b from-[#f2f2f2] to-[#d5d5d5]"
      >
        <svg viewBox="0 0 8 4" className="h-1 w-2">
          <path d="M0 0h8L4 4z" />
        </svg>
      </button>
      <div className="-mb-px flex h-[19px] w-[100px] items-center rounded-t-md border border-b-0 border-[#888] bg-[#fafafa] pb-0.5 pl-[22px] pr-2">
        <span className="flex-1 text-[11px] font-bold text-black">Home</span>
        <button type="button" aria-label="Close tab">
          <svg viewBox="0 0 8 8" className="size-2">
            <path d="M1 1l6 6M7 1L1 7" stroke="#888" strokeWidth="2" />
          </svg>
        </button>
      </div>
    </div>
    <div className="flex h-[18px] shrink-0 bg-[#fafafa]">
      <div className="w-[14px] shrink-0 border-b border-[#444]" />
      <div className="min-w-0 flex-1">
        <HorizontalRuler />
      </div>
    </div>
    <div className="flex min-h-0 flex-1">
      <div className="w-[15px] shrink-0 overflow-hidden border-b border-[#888] bg-[#fafafa]">
        <VerticalRuler />
      </div>
      <div className="flex min-w-0 flex-1 flex-col">
        <div className="flex min-h-0 flex-1">
          <Canvas />
          <div className="flex w-[17px] shrink-0 flex-col items-center bg-[#ebebeb] py-1.5">
            <ArrowGlyph className="" />
            <span className="mt-[7px] h-[7px] w-[15px] rounded-xs border border-[#999] bg-linear-to-r from-[#f5f5f5] to-[#cfcfcf]" />
            <ArrowGlyph className="mt-auto rotate-180" />
          </div>
        </div>
        <div className="flex h-[17px] shrink-0 items-center bg-[#ebebeb] pl-1.5">
          <ArrowGlyph className="-rotate-90" />
          <span className="ml-[5px] flex h-[15px] w-8 items-center justify-center rounded-xs border border-[#999] bg-linear-to-b from-[#f8f8f8] to-[#cfcfd2]">
            <span className="h-[7px] w-2 bg-[repeating-linear-gradient(90deg,#333_0_2px,#fff_2px_3px)]" />
          </span>
          <ArrowGlyph className="ml-auto mr-[23px] rotate-90" />
        </div>
      </div>
    </div>
    <div className="flex h-[5px] shrink-0 justify-center bg-[#cfcfcf]">
      <div className="flex w-[100px] justify-center bg-[#777]">
        <ArrowGlyph className="rotate-180 brightness-200" />
      </div>
    </div>
    <div className="flex h-[7px] shrink-0 items-start overflow-hidden bg-[#f0f0f0] pr-[3px] pt-0.5">
      <div className="flex-1" />
      <div className="mt-1 h-px w-[315px] bg-[#777]" />
      <div className="flex flex-1 justify-end">
        <PanelButtons />
      </div>
    </div>
  </main>
);

const Splitter = ({ arrow }: { arrow: string }) => (
  <div className="w-[5px] shrink-0 bg-[#cfcfcf] pt-[263px]">
    <div className="flex h-[100px] items-center justify-center overflow-hidden bg-[#777]">
      <ArrowGlyph className={`shrink-0 brightness-200 ${arrow}`} />
    </div>
  </div>
);

const fieldInput =
  'h-[18px] w-[42px] rounded-xs border border-[#dfe3e8] border-t-[#b5b5b5] bg-white pl-[3px] disabled:border-[#adb2b5] disabled:bg-[#f0f0f0] disabled:text-[#888]';

const Field = ({ label, value, disabled }: { label: string; value: string; disabled?: boolean }) => (
  <label className={`flex items-center ${disabled ? 'text-[#a5a5a5]' : 'text-black'}`}>
    <span className="w-[43px]">{label}</span>
    <input defaultValue={value} disabled={disabled} className={fieldInput} />
  </label>
);

const fieldRow = 'flex h-6 items-center gap-[10px]';
const comboBorder = 'border border-[#dfe3e8] border-t-[#b5b5b5]';

const Heading = ({ children }: { children: string }) => (
  <h3 className="flex h-[18px] items-center text-[11px] font-bold text-black">
    <svg viewBox="0 0 8 8" className="mr-1.5 size-2">
      <path d="M8 0v8H0z" fill="#444" />
    </svg>
    {children}
  </h3>
);

const buttonSet =
  'flex h-[21px] divide-x divide-[#777] overflow-hidden rounded-[4px] border border-[#777] bg-linear-to-b from-[#fafafa] to-[#d5d5d5]';
const setButton = 'flex w-[23px] items-center justify-center';

const Properties = () => (
  <aside className="flex w-[250px] shrink-0 flex-col overflow-hidden bg-[#f0f0f0] text-[11px]">
    <PanelHeader title="Widget Properties" />
    <div className="px-[5px] pt-0.5">
      <label className="flex flex-col font-bold text-black">
        <span className="leading-[21px]">Label</span>
        <input className="h-5 border border-[#dfe3e8] border-t-[#b5b5b5] bg-white px-1 font-normal" />
      </label>
    </div>
    <div className="mt-2 flex shrink-0 items-center">
      <span className="h-px flex-1 bg-[#999]" />
      <div className="flex h-[18px] divide-x divide-[#777] overflow-hidden rounded border border-[#666] bg-linear-to-b from-white to-[#ddd]">
        <button type="button" aria-label="Annotations" className="flex w-7 items-center justify-center">
          <Icon name="notes" />
        </button>
        <button type="button" aria-label="Interactions" className="flex w-[29px] items-center justify-center">
          <Icon name="bolt" className="size-[14px]" />
        </button>
        <button type="button" aria-label="Formatting" className="flex w-[29px] items-center justify-center bg-[#97cdf0]">
          <Icon name="formatting" />
        </button>
      </div>
      <span className="h-px flex-1 bg-[#999]" />
    </div>
    <p className="mt-[5px] text-center leading-4 text-[#666]">Formatting</p>
    <div className="mt-2 flex min-h-0 flex-1">
      <div className="min-w-0 flex-1 overflow-hidden pl-[11px] pr-[23px] pt-0.5">
        <Heading>Location + Size</Heading>
        <div className="pl-[9px]">
          <h4 className="mt-[3px] font-bold leading-4 text-black">Selected Item</h4>
          <div className={fieldRow}>
            <Field label="Left:" value="156" />
            <Field label="Top:" value="32" />
          </div>
          <div className={fieldRow}>
            <Field label="Width:" value="40" />
            <Field label="Height:" value="16" disabled />
          </div>
          <div className={fieldRow}>
            <Field label="Rot °:" value="0" />
            <Field label="Text:" value="0" disabled />
          </div>
          <h4 className="mt-[7px] font-bold leading-4 text-[#a5a5a5]">Entire Selection</h4>
          <div className={fieldRow}>
            <Field label="Left:" value="" disabled />
            <Field label="Top:" value="" disabled />
          </div>
          <div className={fieldRow}>
            <Field label="Width:" value="" disabled />
            <Field label="Height:" value="" disabled />
          </div>
          <div className="mt-[5px] flex">
            <div className={buttonSet}>
              <button type="button" aria-label="Lock selection" className={setButton}>
                <Icon name="lock" />
              </button>
              <button type="button" aria-label="Unlock selection" className={setButton}>
                <Icon name="unlock" />
              </button>
            </div>
          </div>
        </div>
        <hr className="ml-[14px] mt-1.5 border-[#888]" />
        <Heading>Font</Heading>
        <div className="mt-1.5 flex justify-between pl-[9px]">
          <Combo value="Arial" label="Panel font family" className={`h-[18px] w-[140px] ${comboBorder}`} />
          <Combo value="13" label="Panel font size" className={`h-[18px] w-[45px] ${comboBorder}`} />
        </div>
        <div className="mt-1.5 flex items-center pl-[9px]">
          <div className={buttonSet}>
            <button type="button" aria-label="Bold" className={setButton}>
              <Letter>B</Letter>
            </button>
            <button type="button" aria-label="Italic" className={setButton}>
              <Letter>I</Letter>
            </button>
            <button type="button" aria-label="Underline" className={setButton}>
              <Letter>U</Letter>
            </button>
          </div>
          <div className={`${buttonSet} ml-[11px]`}>
            <button type="button" aria-label="Font color" className="flex w-6 flex-col items-center justify-center">
              <span className="font-['Liberation_Serif',serif] text-[17px] font-bold leading-[14px] text-[#222]">T</span>
              <span className="h-[3px] w-[14px] bg-[#0000ee]" />
            </button>
            <button type="button" aria-label="Font color options" className="flex w-[13px] items-center justify-center">
              <Icon name="caret" />
            </button>
          </div>
          <div className={`${buttonSet} ml-[5px]`}>
            <button type="button" aria-label="Bullets" className={setButton}>
              <Icon name="bullets" />
            </button>
          </div>
          <button type="button" aria-label="Insert link" className="ml-2">
            <Icon name="link" />
          </button>
        </div>
        <hr className="ml-[14px] mt-[9px] border-[#888]" />
        <Heading>Alignment + Padding</Heading>
        <div className="mt-px flex gap-[11px] pl-[9px]">
          <div className={buttonSet}>
            <button type="button" aria-label="Left" className={`${setButton} bg-[#97cdf0]`}>
              <Icon name="left" />
            </button>
            <button type="button" aria-label="Center" className={setButton}>
              <Icon name="center" />
            </button>
            <button type="button" aria-label="Right" className={setButton}>
              <Icon name="right" />
            </button>
          </div>
          <div className={`${buttonSet} opacity-60`}>
            <button type="button" aria-label="Top" className={`${setButton} bg-[#97cdf0]`}>
              <Icon name="valignTop" />
            </button>
            <button type="button" aria-label="Middle" className={setButton}>
              <Icon name="valignMid" />
            </button>
            <button type="button" aria-label="Bottom" className={setButton}>
              <Icon name="valignBot" />
            </button>
          </div>
        </div>
      </div>
      <div className="flex w-[17px] shrink-0 flex-col items-center bg-[#ebebeb] pt-1.5">
        <ArrowGlyph className="" />
        <span className="mt-[7px] flex w-[15px] flex-1 justify-center rounded-t-xs border border-b-0 border-[#999] bg-linear-to-r from-[#f5f5f5] to-[#c9c9cc] pt-48">
          <span className={gripV} />
        </span>
      </div>
    </div>
  </aside>
);

const Gradients = () => (
  <svg className="absolute size-0" aria-hidden="true">
    <defs>
      <linearGradient id="page" x2="1" y2="1">
        <stop stopColor="#fff" />
        <stop offset="1" stopColor="#b4cfde" />
      </linearGradient>
      <linearGradient id="sky" x2="0" y2="1">
        <stop stopColor="#9bd4ef" />
        <stop offset="1" stopColor="#3e9cc8" />
      </linearGradient>
      <linearGradient id="gold">
        <stop stopColor="#c7962a" />
        <stop offset=".5" stopColor="#ffe06a" />
        <stop offset="1" stopColor="#b88420" />
      </linearGradient>
      <linearGradient id="water" x2="0" y2="1">
        <stop offset=".3" stopColor="#f2f4f5" />
        <stop offset="1" stopColor="#6db4d6" />
      </linearGradient>
      <linearGradient id="haze" x2="0" y2="1">
        <stop stopColor="#c9cbce" />
        <stop offset=".6" stopColor="#f6f6f6" />
      </linearGradient>
      <linearGradient id="frame" x2="1" y2="1">
        <stop offset=".5" stopColor="#fff" />
        <stop offset="1" stopColor="#dcdcdc" />
      </linearGradient>
    </defs>
  </svg>
);

const App = () => (
  <div className="flex h-screen flex-col overflow-hidden bg-white font-['Liberation_Sans',sans-serif]">
    <Gradients />
    <div className="h-[233px] shrink-0" />
    <TitleBar />
    <MenuBar />
    <Toolbars />
    <div className="flex min-h-0 flex-1 bg-[#cfcfcf]">
      <div className="flex w-[250px] shrink-0 flex-col gap-[5px] overflow-hidden">
        <Sitemap />
        <Widgets />
        <section>
          <PanelHeader title="Masters" />
        </section>
      </div>
      <Splitter arrow="-rotate-90" />
      <Workspace />
      <Splitter arrow="rotate-90" />
      <Properties />
    </div>
  </div>
);

export default App;
